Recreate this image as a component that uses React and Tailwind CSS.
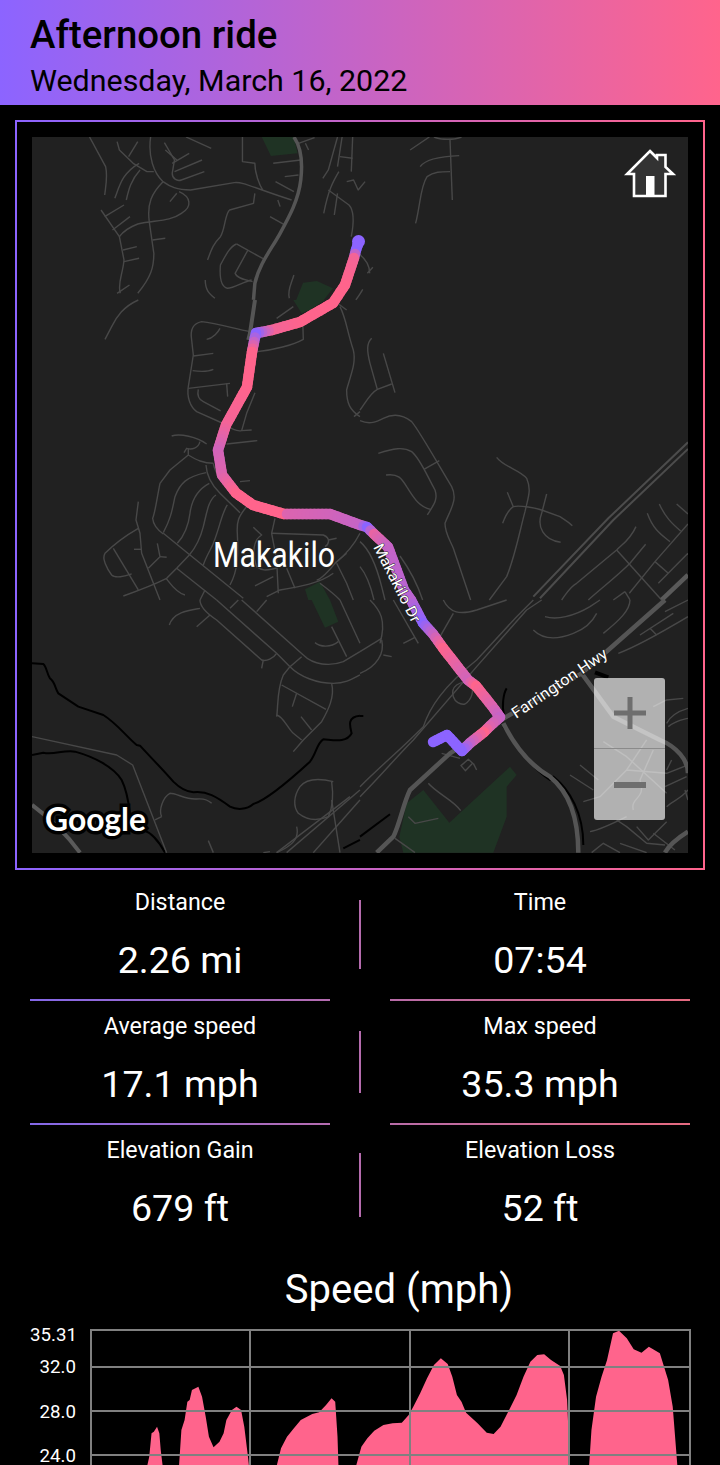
import React from "react";

const PINK = [255, 100, 140];
const PURPLE = [140, 100, 255];

// [x, y, purple amount]
const ROUTE = [
  [359, 241, 1], [356, 250, 1], [354, 258, 0.1], [345, 285, 0], [333, 303, 0], [300, 322, 0], [272, 330, 0.1],
  [262, 332, 0.6], [256, 333, 1], [254, 342, 0.5], [252, 352, 0], [247, 387, 0], [226, 425, 0.1], [218, 450, 0.4],
  [222, 475, 0.3], [236, 493, 0], [253, 505, 0], [284, 514, 0], [287, 514, 0.3], [330, 514, 0.4], [360, 525, 0.5],
  [367, 527, 1], [374, 534, 0.2], [388, 547, 0.5], [404, 590, 0.6], [411, 600, 0.6], [423, 623, 1], [433, 634, 0.5], [443, 648, 0],
  [468, 680, 0.4], [476, 686, 0], [492, 706, 0.3], [500, 717, 0.5], [490, 726, 0.3], [484, 732, 0], [470, 743, 0.5], [462, 751, 1],
  [447, 735, 1], [433, 742, 1],
];

function routeSegments() {
  const out = [];
  for (let i = 0; i < ROUTE.length - 1; i++) {
    const [x0, y0, p0] = ROUTE[i];
    const [x1, y1, p1] = ROUTE[i + 1];
    const n = Math.max(1, Math.round(Math.hypot(x1 - x0, y1 - y0) / 4));
    for (let k = 0; k < n; k++) {
      const a = k / n;
      const b = (k + 1) / n;
      const p = p0 + (p1 - p0) * a;
      const c = PINK.map((v, j) => Math.round(v + (PURPLE[j] - v) * p));
      out.push({
        x1: x0 + (x1 - x0) * a,
        y1: y0 + (y1 - y0) * a,
        x2: x0 + (x1 - x0) * b,
        y2: y0 + (y1 - y0) * b,
        color: `rgb(${c[0]},${c[1]},${c[2]})`,
      });
    }
  }
  return out;
}

const TOP_MINOR = [
  "M195 411 L230 500 C235 530 230 560 228 585",
  "M255 425 L260 450 L290 490 L320 515 L335 515",
  "M303 490 C265 520 260 560 250 595",
  "M305 510 C285 540 280 570 275 600",
  "M328 411 C322 470 335 520 355 545 C370 560 385 570 415 570 L510 548 C530 545 545 560 635 600",
  "M355 545 C330 580 320 610 325 665 L335 760 C335 800 330 830 300 880",
  "M220 630 L260 710 L270 780 C268 820 255 850 262 880",
  "M270 615 L228 650",
  "M283 650 L245 690",
  "M390 575 C415 590 420 620 395 640 C370 665 340 660 300 672 C285 680 270 690 260 710",
  "M360 715 L332 720",
  "M298 740 L268 750",
  "M303 775 L270 785",
  "M282 855 L255 880",
  "M405 411 L460 445",
  "M300 425 L280 470",
  "M360 450 L385 480",
  "M412 460 L375 490",
  "M440 480 L380 515",
  "M445 515 L395 540 C385 545 375 535 375 520 L380 480 L358 428",
  "M385 580 L370 605",
  "M528 411 L528 485 L555 490 C555 520 565 555 572 570",
  "M555 580 L552 610 L500 630 C490 640 490 690 480 710 C465 730 460 750 452 780",
  "M595 490 L655 480",
  "M620 530 L650 525",
  "M600 545 L640 575",
  "M605 600 L610 620",
  "M588 650 L620 675",
  "M515 732 L578 780",
  "M515 732 C500 740 490 770 480 795 C478 830 480 860 495 865 C510 865 530 845 548 840",
  "M540 750 L512 820 C515 835 535 840 550 845",
  "M447 840 C447 870 455 880 468 895",
  "M640 825 C635 850 625 870 630 895",
  "M735 411 L715 510 L703 535",
  "M745 411 L735 500",
  "M768 411 L765 515",
  "M740 470 L768 475",
  "M738 515 C725 545 715 570 705 640",
  "M715 570 L760 615 C770 630 772 660 765 710",
  "M735 580 L728 645",
  "M755 545 L770 540 L780 570 L795 545",
  "M780 760 C800 780 805 800 805 820",
  "M800 820 L812 802",
  "M790 868 C785 880 780 890 775 900",
  "M935 411 L893 450",
  "M945 411 C960 420 990 420 1005 411",
  "M980 420 L985 600",
  "M915 500 C925 480 950 470 1000 467",
  "M905 670 C915 620 915 560 930 530 C945 515 960 515 980 515",
  "M650 430 L685 413",
  "M665 430 L672 450",
];

const MID_L_MINOR = [
  "M415 0 C370 20 350 50 335 80 L315 118",
  "M750 95 C700 85 650 70 605 65 C580 70 570 90 575 120 L580 165 L565 260 C560 290 570 320 590 335 L680 375 C690 385 710 395 725 392 L755 390",
  "M620 118 C640 115 655 95 660 85",
  "M580 168 L640 160",
  "M578 212 C600 215 625 215 640 208",
  "M565 265 L690 250",
  "M595 268 C590 290 600 300 610 305 L662 333",
  "M680 250 L683 290",
  "M772 155 C820 150 880 135 910 118 L908 50",
  "M880 20 L830 55",
  "M765 278 L740 340 L725 392",
  "M680 432 L772 422",
  "M515 408 C540 400 590 410 620 432",
  "M600 425 C595 445 575 450 560 445 L552 458",
  "M565 445 L565 465 L510 510 L480 550 C470 600 465 640 458 655 C460 680 480 695 490 702",
  "M565 465 C590 480 610 490 640 490",
  "M618 495 C620 530 640 560 660 580 L720 638",
  "M640 490 C645 520 670 550 680 560",
  "M618 518 C560 530 540 550 525 590 C515 640 510 660 490 698",
  "M628 550 C590 570 575 600 570 640 C565 680 550 710 532 730",
  "M648 585 C625 600 620 640 610 680 C600 720 585 745 568 765",
  "M682 615 C665 640 660 680 640 730 C635 745 620 765 610 795",
  "M740 620 C715 650 710 665 712 700 C715 760 715 810 690 855",
  "M825 655 L815 700 L830 780 L835 880",
  "M860 805 L885 865",
  "M815 700 L970 705 C995 715 985 735 975 740",
  "M985 720 L1010 715",
  "M760 682 L785 705 C760 720 755 760 770 800 C790 815 800 810 830 805",
  "M720 545 L750 542",
  "M490 700 L570 765 L730 895",
  "M568 765 L530 805 L500 835 C470 850 420 870 370 888",
  "M530 805 L650 900",
  "M415 605 L408 660 L420 700 L425 760 L480 900",
  "M415 685 C380 705 345 730 315 760 C305 775 320 805 335 825 C345 835 375 830 395 822",
  "M340 745 L415 870",
  "M402 748 L425 748",
  "M472 730 L480 770 L445 805",
  "M480 770 L500 772",
  "M498 835 C510 850 530 880 555 885",
  "M615 870 L600 900",
  "M1000 820 C960 850 900 860 840 870 L800 890",
  "M820 830 L765 858",
  "M1040 760 L1005 790",
  "M1080 700 C1060 740 1030 770 1005 790 C990 810 960 840 950 840",
  "M1010 790 L1040 850 L1060 900",
  "M960 850 C1000 880 1010 890 1020 900",
  "M1020 20 C1040 60 1040 90 1060 150 C1070 190 1050 230 1040 270 C1040 310 1050 330 1080 350",
  "M1062 350 L1080 335",
  "M1000 0 L1040 30",
];

const MID_R_MINOR = [
  "M35 115 C20 130 20 150 30 190 L52 268 C30 280 15 310 0 330",
  "M70 160 L105 278",
  "M52 268 L95 252",
  "M0 362 C30 375 50 365 70 355 C100 340 130 345 155 365 C180 395 250 520 275 560 C295 600 270 630 255 670 C255 700 270 720 280 745 L332 900",
  "M55 460 C100 445 130 440 155 455 C180 475 200 525 225 570 C235 600 220 615 202 645",
  "M192 508 L238 482",
  "M78 525 C115 520 125 535 140 560 C160 590 175 620 212 628",
  "M410 472 C430 500 480 510 500 535 C515 570 505 590 495 635 C480 690 465 770 440 830 L388 900",
  "M442 577 L460 620 C445 630 435 650 428 670",
  "M460 620 C480 615 530 625 545 630 L600 650 C615 660 625 665 637 677",
  "M560 582 L545 640 C530 680 550 720 602 727",
  "M120 768 C150 810 175 860 188 900",
  "M0 725 C30 750 50 800 65 860 L75 900",
  "M0 800 C25 830 35 870 42 900",
  "M898 612 C915 650 935 670 962 693",
  "M950 612 L984 642",
  "M862 640 C880 690 905 705 930 725",
  "M984 672 L885 785 L808 880",
  "M828 680 C810 720 790 730 770 750 L650 850 C630 860 620 880 605 900",
  "M857 733 L810 790 C770 830 730 860 685 900",
  "M770 750 L905 900",
  "M885 785 L925 820",
  "M984 760 L895 850",
  "M795 875 L810 900",
  "M760 900 L795 875",
];

const BOT_L_MINOR = [
  "M600 0 C600 20 620 40 650 60 L785 180 C800 185 820 175 830 160",
  "M650 0 L830 160 L870 200",
  "M690 25 L715 0",
  "M770 35 L800 0",
  "M725 0 L910 165 C940 195 990 200 1030 185 L1080 155",
  "M905 170 L870 200 C900 230 950 250 1000 250 C1040 250 1060 235 1080 225",
  "M600 25 C570 30 520 35 508 75",
  "M630 45 L590 80",
  "M790 180 L785 205",
  "M870 200 L850 225 C830 270 835 320 830 350",
  "M845 255 L978 328",
  "M995 250 C1005 290 985 330 965 365 L910 420 L880 455",
  "M890 280 L877 320",
  "M903 350 L935 390",
  "M830 345 C850 350 860 380 880 400 L905 420",
  "M945 128 C960 140 990 145 1015 125",
  "M995 80 L1040 170",
  "M1020 0 L1080 130",
  "M96 410 L350 465 L398 495 L500 758",
  "M485 650 C475 630 490 590 510 580 C530 580 560 600 590 597 C610 595 625 600 635 610",
  "M465 660 L485 650",
  "M625 722 L640 758",
  "M1000 545 C960 535 920 535 900 560 C880 590 880 620 895 640 C920 660 950 665 985 650 C1000 620 1000 580 995 545",
  "M890 680 C900 720 870 740 830 758",
  "M830 758 L1050 590",
  "M860 758 L1080 570",
  "M940 758 L1080 600",
  "M995 600 L1020 758",
  "M790 758 L810 755",
];

const BOT_R_MINOR = [
  "M0 590 C60 530 110 470 160 420 C220 350 280 280 350 200 L500 30 L545 0",
  "M0 560 C60 500 120 450 190 380 C210 320 250 260 350 180 L470 50 L520 0",
  "M30 0 C60 30 80 60 60 130",
  "M100 0 L175 130",
  "M130 130 L165 112",
  "M65 115 L0 155",
  "M65 120 C75 160 50 200 0 220",
  "M70 165 L95 170",
  "M250 0 C270 40 300 45 350 30 L440 0",
  "M240 110 L280 40",
  "M520 90 C550 120 590 120 640 100 C680 85 700 60 710 40",
  "M555 50 C590 60 640 50 690 20 L720 0",
  "M730 100 C780 60 810 30 810 0",
  "M775 160 C830 140 900 100 984 50",
  "M870 85 L890 105",
  "M840 105 L940 40",
  "M915 35 L984 0",
  "M280 290 C270 260 300 240 330 250 C345 270 335 300 315 312 C300 315 285 305 280 290",
  "M245 460 L300 475",
  "M303 497 L325 478 L338 490 L316 512 Z",
  "M340 490 L350 510",
  "M205 550 C230 580 280 600 302 632",
  "M105 715 L165 758",
  "M145 650 L165 670 L235 655",
  "M630 525 L700 570",
  "M660 495 L715 540",
  "M984 495 L920 520 L800 510 L720 590 L670 605",
  "M860 420 L800 510",
  "M730 425 L800 470 L920 580",
  "M820 630 C810 590 860 600 840 540 L880 450",
  "M880 320 L920 300 L970 295",
  "M920 370 C930 350 950 335 984 325",
  "M925 380 C950 360 965 360 984 355",
  "M915 560 L980 530",
  "M920 620 C940 600 960 600 984 570",
  "M920 510 L935 480",
  "M975 570 L984 600",
  "M690 695 C720 690 760 670 800 650",
  "M770 660 L800 680 L860 730 L915 735",
  "M830 680 L865 720 L920 665",
  "M880 700 L945 750",
  "M695 758 L730 730 L780 758",
  "M780 730 L860 758",
];

function Roads({ d, width = 1.4, color = "#484848", tf }) {
  return (
    <g transform={tf} fill="none" stroke={color} strokeWidth={width} strokeLinejoin="round">
      {d.map((p, i) => (
        <path key={i} d={p} vectorEffect="non-scaling-stroke" />
      ))}
    </g>
  );
}

const TF1 = "scale(0.4592 0.3333)";
const TF2 = "translate(0 300) scale(0.3333)";
const TF3 = "translate(360 300) scale(0.3333)";
const TF4 = "translate(0 600) scale(0.3333)";
const TF5 = "translate(360 600) scale(0.3333)";

function MapSvg() {
  return (
    <svg viewBox="32 137 656 716" className="block w-full h-full">
      <rect x="32" y="137" width="656" height="716" fill="#212121" />
      {/* parks */}
      <g fill="#1f3324">
        <path d="M570 411 L640 411 L648 460 L590 468 Z" transform={TF1} />
        <path d="M645 900 L660 848 L690 843 L725 865 L705 900 Z" transform={TF1} />
        <path d="M880 0 L975 0 L930 30 L905 40 Z" transform={TF2} />
        <path d="M915 868 L960 845 L990 900 L925 900 Z" transform={TF2} />
        <path d="M935 0 L990 0 L1015 65 L975 83 Z" transform={TF4} />
        <path d="M190 570 L268 668 L450 500 L470 525 L440 560 L440 650 L400 758 L130 758 L118 710 L140 610 Z" transform={TF5} />
      </g>
      {/* water */}
      <Roads
        tf={TF4}
        color="#000000"
        width={2}
        d={[
          "M96 190 L130 192 C140 200 140 220 150 235 C165 245 165 265 175 280 L235 320 L310 345 C350 370 380 410 410 435 L420 437 C450 470 490 510 520 545 C540 565 560 575 580 577 C620 572 650 590 690 620 C710 630 740 630 760 612 C800 600 870 540 930 485 C950 460 950 430 970 418 C1000 420 1040 430 1055 400 C1050 380 1040 350 1080 347",
          "M96 465 L130 458 C160 465 190 450 225 455 C280 470 340 500 365 540 C380 570 385 600 390 640 L430 690 C460 700 480 730 495 758",
          "M1030 745 L1080 720",
        ]}
      />
      <Roads
        tf={TF5}
        color="#000000"
        width={2}
        d={[
          "M440 265 C430 280 425 320 432 345",
          "M430 380 C470 440 510 500 570 540 L580 530 C630 570 670 640 670 735",
          "M90 643 L0 710",
          "M0 348 L10 348",
        ]}
      />
      <Roads tf={TF5} color="#000000" width={4} d={["M705 217 L745 232"]} />
      {/* minor roads */}
      <Roads tf={TF1} d={TOP_MINOR} />
      <Roads tf={TF2} d={MID_L_MINOR} />
      <Roads tf={TF3} d={MID_R_MINOR} />
      <Roads tf={TF4} d={BOT_L_MINOR} />
      <Roads tf={TF5} d={BOT_R_MINOR} />
      {/* major roads */}
      <Roads tf={TF1} width={3.5} color="#555555" d={["M640 411 C655 440 660 480 655 540 C650 600 630 650 610 700 C590 750 565 790 555 850 L552 900"]} />
      <Roads tf={TF2} width={4} color="#555555" d={["M765 0 L750 100 L745 120"]} />
      <Roads tf={TF3} width={2} color="#4c4c4c" d={["M984 427 L745 655 L520 890", "M984 447 L760 660 L540 895"]} />
      <Roads tf={TF3} width={4.5} color="#5a5a5a" d={["M984 825 L905 900"]} />
      <Roads tf={TF4} width={4} color="#5a5a5a" d={["M96 615 C130 640 190 690 240 758"]} />
      <Roads
        tf={TF5}
        width={4.5}
        color="#555555"
        d={[
          "M915 0 L745 150 L665 220",
          "M665 220 L440 350 L270 460 L150 570 C130 610 120 670 100 710 L50 758",
          "M430 370 C460 430 500 490 570 530 C620 570 655 640 655 758",
          "M665 220 L760 350 L900 420 C950 440 984 480 984 520",
          "M915 758 C930 730 960 710 984 695",
        ]}
      />
      {/* route */}
      <g strokeWidth="10.5" strokeLinecap="round">
        {routeSegments().map((s, i) => (
          <line key={i} x1={s.x1} y1={s.y1} x2={s.x2} y2={s.y2} stroke={s.color} />
        ))}
      </g>
      <circle cx="358.5" cy="241.5" r="6.5" fill="#8c64ff" />
      {/* labels */}
      <text
        x="213"
        y="567"
        fill="#ffffff"
        fontSize="35"
        textLength="122"
        lengthAdjust="spacingAndGlyphs"
        stroke="#212121"
        strokeWidth="2"
        paintOrder="stroke"
        style={{ fontFamily: "Roboto, sans-serif", fontWeight: 400 }}
      >
        Makakilo
      </text>
      <text
        transform="translate(373 547) rotate(63)"
        fill="#ffffff"
        fontSize="15"
        textLength="86"
        lengthAdjust="spacingAndGlyphs"
        stroke="#212121"
        strokeWidth="0.8"
        paintOrder="stroke"
        style={{ fontFamily: "Roboto, sans-serif" }}
      >
        Makakilo Dr
      </text>
      <text
        transform="translate(516 719) rotate(-34)"
        fill="#ffffff"
        fontSize="15.5"
        textLength="112"
        lengthAdjust="spacingAndGlyphs"
        stroke="#212121"
        strokeWidth="2"
        paintOrder="stroke"
        style={{ fontFamily: "Roboto, sans-serif" }}
      >
        Farrington Hwy
      </text>
      <text
        x="45"
        y="831"
        fill="#ffffff"
        fontSize="33"
        textLength="101"
        lengthAdjust="spacingAndGlyphs"
        stroke="#000000"
        strokeWidth="7"
        paintOrder="stroke"
        style={{ fontFamily: "Lato, sans-serif", fontWeight: 700 }}
      >
        Google
      </text>
    </svg>
  );
}

function HomeIcon() {
  return (
    <svg width="52" height="50" viewBox="0 0 52 50" className="block">
      <path
        d="M26 2 L33 9 L33 6 L41.5 6 L41.5 18 L49 25 L41.5 25 L41.5 47 L10 47 L10 25 L3 25 Z"
        fill="#333333"
        stroke="#ffffff"
        strokeWidth="2.6"
        strokeLinejoin="miter"
      />
      <rect x="22" y="27" width="8.5" height="19" fill="#ffffff" />
    </svg>
  );
}

function Stat({ label, value }) {
  return (
    <div className="w-[300px] h-[124px] flex flex-col items-center">
      <div className="mt-[12px] text-[23.3px] leading-[26px] text-white">{label}</div>
      <div className="mt-[24px] text-[37.6px] leading-[42px] text-white">{value}</div>
    </div>
  );
}

function Row({ left, right, divider, lines = true }) {
  return (
    <div className="flex justify-between px-[30px] h-[124px]">
      <div className="relative">
        <Stat {...left} />
        {lines && <div className="absolute left-0 right-0 bottom-0 h-[2px] bg-linear-to-r/srgb from-[#8468e8] to-[#b56cb0]" />}
      </div>
      <div className={`w-[2px] self-end mb-[32px] bg-[#b56cae] ${divider}`} />
      <div className="relative">
        <Stat {...right} />
        {lines && <div className="absolute left-0 right-0 bottom-0 h-[2px] bg-linear-to-r/srgb from-[#b86ca8] to-[#e66a80]" />}
      </div>
    </div>
  );
}

const CHART_SHAPES = [
  "321,615 325,590 330,520 335,515 342,500 347,520 350,570 354,615",
  "390,615 395,510 402,480 408,425 413,420 418,390 432,380 440,410 448,470 455,530 465,562 478,545 487,520 493,480 505,450 515,440 525,450 532,500 540,590 542,615",
  "603,615 612,565 625,530 640,505 655,480 680,462 695,457 710,435 722,415 730,425 735,530 737,615",
  "776,615 787,560 800,535 815,512 835,495 855,490 875,488 890,465 900,440 915,400 930,355 945,315 960,295 975,312 985,350 995,405 1005,425 1015,458 1040,490 1060,518 1075,522 1090,500 1105,460 1125,405 1140,350 1155,305 1170,285 1185,283 1200,300 1220,318 1228,345 1235,420 1241,615",
  "1283,615 1288,510 1298,410 1310,350 1322,300 1335,220 1348,212 1365,235 1380,268 1397,278 1413,260 1437,280 1455,360 1465,440 1475,615",
];

function Chart() {
  const grid = "#808080";
  return (
    <svg width="601" height="136" viewBox="90 1329 601 136" className="block">
      <g transform="translate(0 1260) scale(0.4592 0.3333)" fill="#ff648c">
        {CHART_SHAPES.map((p, i) => (
          <polygon key={i} points={p} />
        ))}
      </g>
      <g stroke={grid} strokeWidth="2">
        <line x1="90" x2="691" y1="1330" y2="1330" />
        <line x1="90" x2="691" y1="1367" y2="1367" />
        <line x1="90" x2="691" y1="1411" y2="1411" />
        <line x1="90" x2="691" y1="1455" y2="1455" />
        <line x1="91" x2="91" y1="1329" y2="1465" />
        <line x1="250" x2="250" y1="1329" y2="1465" />
        <line x1="410" x2="410" y1="1329" y2="1465" />
        <line x1="569" x2="569" y1="1329" y2="1465" />
        <line x1="690" x2="690" y1="1329" y2="1465" />
      </g>
    </svg>
  );
}

export default function App() {
  return (
    <div
      className="w-[720px] h-[1465px] overflow-hidden bg-black text-white"
      style={{ fontFamily: "Roboto, sans-serif" }}
    >
      <header className="h-[105px] pl-[30px] bg-linear-to-r/srgb from-[#8c64ff] to-[#ff648c] text-black">
        <h1 className="pt-[14px] text-[38.4px] leading-[42px] font-medium">Afternoon ride</h1>
        <p className="mt-[7px] text-[30.4px] leading-[36px]">Wednesday, March 16, 2022</p>
      </header>

      <div className="mx-[15px] mt-[15px] p-[2px] bg-linear-to-r/srgb from-[#8c64ff] to-[#ff648c]">
        <div className="bg-black p-[15px]">
          <div className="relative h-[716px]">
            <MapSvg />
            <button className="absolute right-[12px] top-[12px]">
              <HomeIcon />
            </button>
            <div className="absolute left-[562px] top-[541px] w-[71px] h-[142px] rounded-[3px] bg-white/65 flex flex-col">
              <div className="h-[71px] flex items-center justify-center border-b border-[#8a8a8a]">
                <svg width="32" height="32" viewBox="0 0 32 32">
                  <rect x="0" y="13.5" width="32" height="5" fill="#6e6e6e" />
                  <rect x="13.5" y="0" width="5" height="32" fill="#6e6e6e" />
                </svg>
              </div>
              <div className="flex-1 flex items-center justify-center">
                <svg width="32" height="6" viewBox="0 0 32 6">
                  <rect x="0" y="0" width="32" height="6" fill="#6e6e6e" />
                </svg>
              </div>
            </div>
          </div>
        </div>
      </div>

      <section className="mt-[7px]">
        <Row left={{ label: "Distance", value: "2.26 mi" }} right={{ label: "Time", value: "07:54" }} divider="h-[69px]" />
        <Row left={{ label: "Average speed", value: "17.1 mph" }} right={{ label: "Max speed", value: "35.3 mph" }} divider="h-[62px]" />
        <Row left={{ label: "Elevation Gain", value: "679 ft" }} right={{ label: "Elevation Loss", value: "52 ft" }} divider="h-[64px]" lines={false} />
      </section>

      <h2 className="mt-[17px] pl-[78px] text-center text-[40px] leading-[47px]">Speed (mph)</h2>

      <div className="mt-[16px] flex">
        <div className="w-[90px] pr-[14px] shrink-0 text-right text-[18.7px] leading-[18px]">
          <div className="-mt-[3px] -mr-[1px]">35.31</div>
          <div className="mt-[14px]">32.0</div>
          <div className="mt-[27px]">28.0</div>
          <div className="mt-[26px]">24.0</div>
        </div>
        <Chart />
      </div>
    </div>
  );
}
